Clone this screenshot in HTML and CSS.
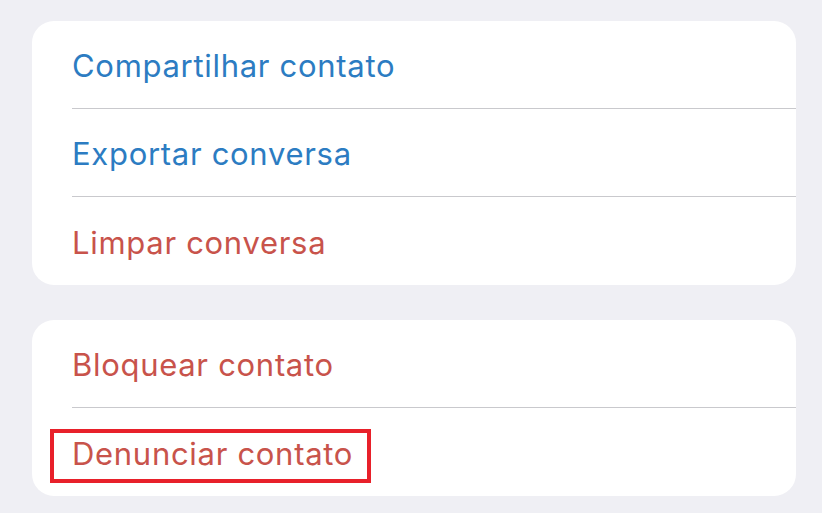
FILE: index.html
```html
<!DOCTYPE html>
<html lang="pt-BR">
<head>
    <meta charset="UTF-8">
    <title>Dados do contato</title>
    <link rel="stylesheet" href="styles.css">
</head>
<body>
    <div class="page">
        <!-- Ações do contato -->
        <ul class="group">
            <li class="row blue">Compartilhar contato</li>
            <li class="row blue">Exportar conversa</li>
            <li class="row red">Limpar conversa</li>
        </ul>

        <!-- Bloqueio / denúncia -->
        <ul class="group">
            <li class="row red">Bloquear contato</li>
            <li class="row red">
                Denunciar contato
                <span class="mark"></span>
            </li>
        </ul>
    </div>
</body>
</html>
```

FILE: styles.css
```css
* {
    margin: 0;
    padding: 0;
    box-sizing: border-box;
}

body {
    font-family: Inter, "Noto Sans", sans-serif;
    background: #efeff4;
}

.page {
    padding: 21px 26px 0 32px;
    display: flex;
    flex-direction: column;
    gap: 35px;
}

.group {
    list-style: none;
    background: #fff;
    border-radius: 22px;
    overflow: hidden;
}

.row {
    position: relative;
    height: 87px;
    margin-left: 40px;
    padding-top: 2px;
    display: flex;
    align-items: center;
    font-size: 31px;
    letter-spacing: 0.7px;
}

.row + .row {
    height: 88px;
    border-top: 1px solid #c9c9cd;
}

.row:last-child {
    height: 89px;
}

.blue {
    color: #2c7cc2;
}

.red {
    color: #c8534b;
}

.mark {
    position: absolute;
    left: -22px;
    top: 21px;
    width: 321px;
    height: 54px;
    border: 4px solid #e8202a;
}
```
